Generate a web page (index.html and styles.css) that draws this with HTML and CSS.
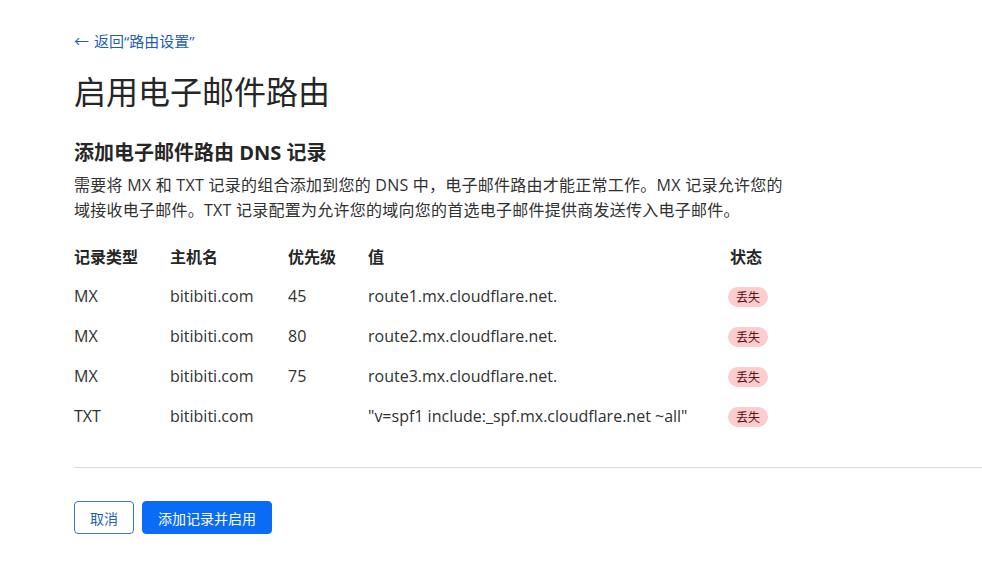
FILE: index.html
```html
<!DOCTYPE html>
<html lang="zh-CN">
<head>
<meta charset="utf-8">
<link rel="stylesheet" href="styles.css">
</head>
<body>
<main class="page">
  <a class="back" href="#"><span class="arrow">←</span> 返回“路由设置”</a>
  <h1 class="title">启用电子邮件路由</h1>
  <h2 class="subtitle">添加电子邮件路由 DNS 记录</h2>
  <p class="desc">需要将 MX 和 TXT 记录的组合添加到您的 DNS 中，电子邮件路由才能正常工作。MX 记录允许您的<br>域接收电子邮件。TXT 记录配置为允许您的域向您的首选电子邮件提供商发送传入电子邮件。</p>
  <div class="table">
    <div class="row head">
      <div>记录类型</div><div>主机名</div><div>优先级</div><div>值</div><div>状态</div>
    </div>
    <div class="row">
      <div>MX</div><div>bitibiti.com</div><div>45</div><div>route1.mx.cloudflare.net.</div><div><span class="badge">丢失</span></div>
    </div>
    <div class="row">
      <div>MX</div><div>bitibiti.com</div><div>80</div><div>route2.mx.cloudflare.net.</div><div><span class="badge">丢失</span></div>
    </div>
    <div class="row">
      <div>MX</div><div>bitibiti.com</div><div>75</div><div>route3.mx.cloudflare.net.</div><div><span class="badge">丢失</span></div>
    </div>
    <div class="row">
      <div>TXT</div><div>bitibiti.com</div><div></div><div>"v=spf1 include:_spf.mx.cloudflare.net ~all"</div><div><span class="badge">丢失</span></div>
    </div>
  </div>
  <hr class="divider">
  <div class="actions">
    <button class="btn secondary">取消</button>
    <button class="btn primary">添加记录并启用</button>
  </div>
</main>
</body>
</html>
```
FILE: styles.css
```css
* { box-sizing: border-box; }
html, body { margin: 0; padding: 0; background: #fff; }
body {
  font-family: "Open Sans", "Noto Sans CJK SC", sans-serif;
  color: #313131;
}
.page {
  padding: 31px 0 0 74px;
}
.back {
  display: block;
  font-size: 15px;
  line-height: 20px;
  color: #1f5fb8;
  text-decoration: none;
}
.back .arrow { margin-right: 1px; }
.title {
  margin: 17px 0 0;
  font-size: 32px;
  line-height: 44px;
  font-weight: 400;
  color: #262626;
  font-family: "Noto Sans CJK SC", sans-serif;
}
.subtitle {
  margin: 27px 0 0;
  font-size: 20px;
  line-height: 28px;
  font-weight: 700;
  color: #262626;
}
.desc {
  margin: 6px 0 0;
  font-size: 16px;
  line-height: 25px;
  letter-spacing: 0.25px;
  color: #313131;
}
.table {
  margin-top: 13px;
  width: 780px;
}
.row {
  display: grid;
  grid-template-columns: 96px 118px 80px 362px auto;
  height: 40px;
  align-items: center;
  font-size: 16px;
}
.row.head { font-weight: 700; color: #262626; }
.badge {
  display: inline-block;
  margin-left: -2px;
  padding: 0 8px;
  height: 20px;
  line-height: 20px;
  border-radius: 10px;
  background: #fbcdcd;
  color: #5c0f0f;
  font-size: 12px;
  font-family: "Noto Sans CJK SC", sans-serif;
}
.divider {
  margin: 31px 0 0;
  border: 0;
  border-top: 1px solid #d9d9d9;
}
.actions {
  margin-top: 33px;
  display: flex;
  gap: 8px;
}
.btn {
  height: 33px;
  border-radius: 4px;
  font-size: 14px;
  font-family: "Noto Sans CJK SC", sans-serif;
  padding: 0 15px;
  cursor: pointer;
}
.btn.secondary {
  width: 60px;
  background: #fff;
  color: #1f5fb8;
  border: 1px solid #3a74c4;
}
.btn.primary {
  width: 130px;
  background: #0a6cf5;
  color: #fff;
  border: 1px solid #0a6cf5;
}
```
